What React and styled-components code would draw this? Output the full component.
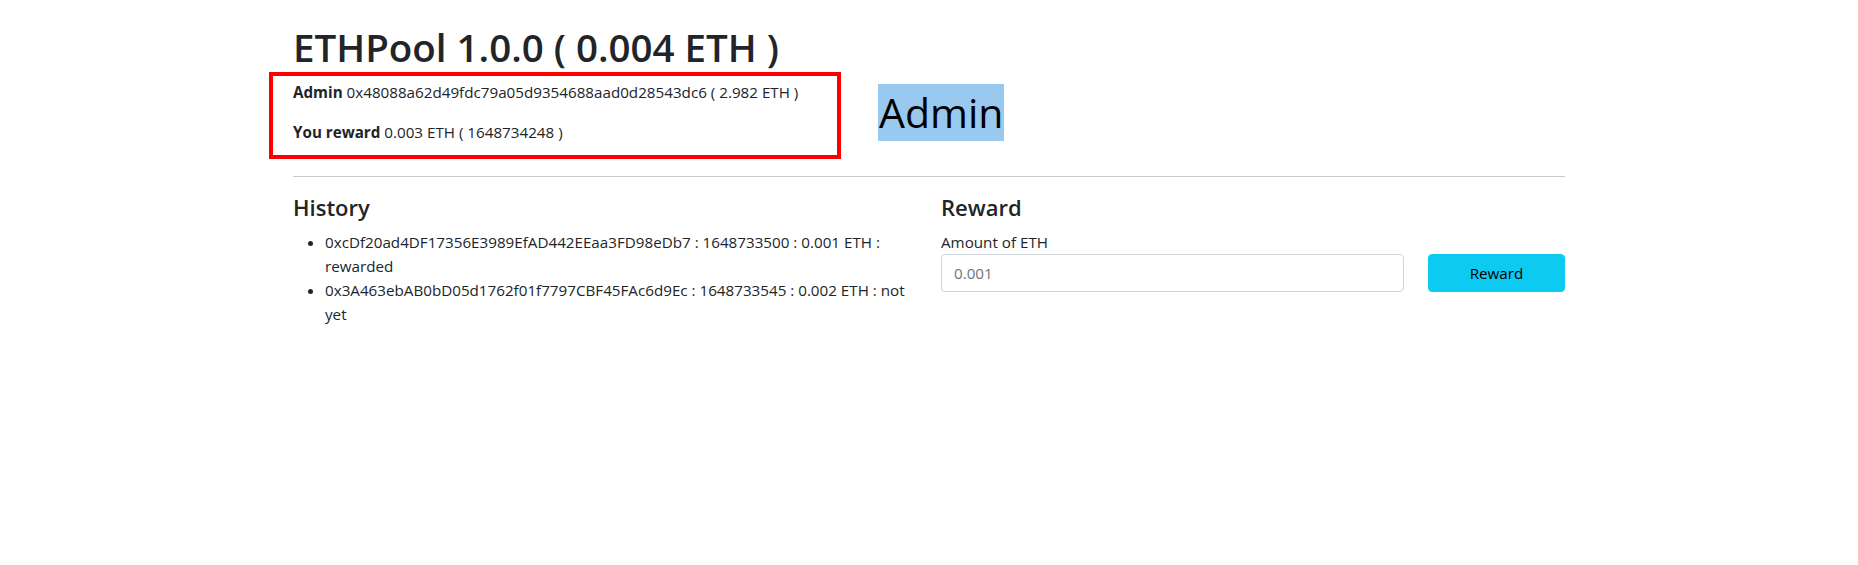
import styled, { createGlobalStyle } from 'styled-components';

const GlobalStyle = createGlobalStyle`
  *, *::before, *::after {
    box-sizing: border-box;
  }
  body {
    margin: 0;
    background: #fff;
    color: #212529;
    font-family: 'Open Sans', 'Noto Sans', sans-serif;
    font-size: 15.2px;
    line-height: 24px;
  }
`;

const Container = styled.div`
  width: 1272px;
  margin: 0 auto;
  padding-top: 24px;
`;

const Title = styled.h1`
  margin: 0 0 2px;
  font-size: 38.5px;
  font-weight: 600;
  line-height: 46px;
`;

const HeaderRow = styled.div`
  display: flex;
  align-items: center;
  margin-left: -24px;
  gap: 37px;
`;

const InfoBox = styled.div`
  width: 572px;
  border: 4px solid #ff0000;
  padding: 4px 20px 11px;
`;

const InfoLine = styled.p`
  margin: 0;
  & + & {
    margin-top: 16px;
  }
  b {
    font-weight: 700;
  }
`;

const Selected = styled.span`
  display: inline-block;
  margin-top: -6px;
  padding: 0 1px;
  background: #99c9ef;
  color: #000;
  font-size: 41px;
  line-height: 57px;
`;

const Divider = styled.hr`
  margin: 17px 0 16px;
  border: 0;
  border-top: 1px solid #c8c9ca;
`;

const Columns = styled.div`
  display: grid;
  grid-template-columns: 1fr 1fr;
  column-gap: 24px;
`;

const SectionTitle = styled.h4`
  margin: 0 0 8px;
  font-size: 22px;
  font-weight: 600;
  line-height: 29px;
`;

const HistoryList = styled.ul`
  margin: 0;
  padding-left: 32px;
  li {
    line-height: 24px;
  }
`;

const Label = styled.label`
  display: block;
`;

const FormRow = styled.div`
  display: grid;
  grid-template-columns: 1fr 137px;
  column-gap: 24px;
`;

const AmountInput = styled.input`
  height: 38px;
  padding: 6px 12px;
  border: 1px solid #ced4da;
  border-radius: 4px;
  font-family: inherit;
  font-size: 15.2px;
  color: #212529;
  &::placeholder {
    color: #6c757d;
  }
`;

const RewardButton = styled.button`
  height: 38px;
  border: 1px solid #0dcaf0;
  border-radius: 4px;
  background: #0dcaf0;
  color: #000;
  font-family: inherit;
  font-size: 15.2px;
  cursor: pointer;
`;

const history = [
  { addr: '0xcDf20ad4DF17356E3989EfAD442EEaa3FD98eDb7', time: 1648733500, amount: '0.001', status: 'rewarded' },
  { addr: '0x3A463ebAB0bD05d1762f01f7797CBF45FAc6d9Ec', time: 1648733545, amount: '0.002', status: 'not yet' },
];

export default function App() {
  return (
    <>
      <GlobalStyle />
      <Container>
        <Title>ETHPool 1.0.0 ( 0.004 ETH )</Title>
        <HeaderRow>
          <InfoBox>
            <InfoLine>
              <b>Admin</b> 0x48088a62d49fdc79a05d9354688aad0d28543dc6 ( 2.982 ETH )
            </InfoLine>
            <InfoLine>
              <b>You reward</b> 0.003 ETH ( 1648734248 )
            </InfoLine>
          </InfoBox>
          <Selected>Admin</Selected>
        </HeaderRow>
        <Divider />
        <Columns>
          <div>
            <SectionTitle>History</SectionTitle>
            <HistoryList>
              {history.map((h) => (
                <li key={h.addr}>{`${h.addr} : ${h.time} : ${h.amount} ETH : ${h.status}`}</li>
              ))}
            </HistoryList>
          </div>
          <div>
            <SectionTitle>Reward</SectionTitle>
            <Label htmlFor='amount'>Amount of ETH</Label>
            <FormRow>
              <AmountInput id='amount' type='text' placeholder='0.001' />
              <RewardButton>Reward</RewardButton>
            </FormRow>
          </div>
        </Columns>
      </Container>
    </>
  );
}
